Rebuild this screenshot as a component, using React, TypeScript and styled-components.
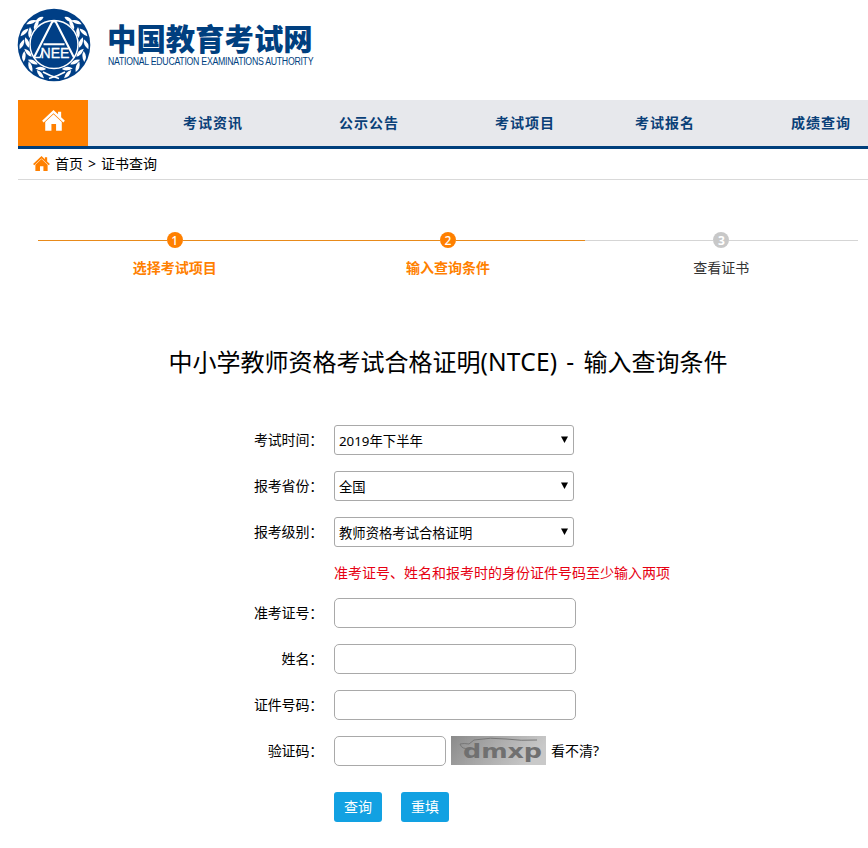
import React from 'react';
import styled, { createGlobalStyle } from 'styled-components';

const Global = createGlobalStyle`
  * { box-sizing: border-box; }
  html, body { margin: 0; background: #fff; overflow: hidden; }
  body, input, button {
    font-family: "Noto Sans", "Noto Sans CJK SC", sans-serif;
    font-size: 14px;
    color: #000;
  }
`;

const Page = styled.div`
  width: 868px;
  height: 848px;
  overflow: hidden;
  padding-left: 18px;
`;

const Header = styled.header`
  display: flex;
  height: 100px;
  padding-top: 8px;
`;

const Emblem = styled.svg`
  width: 74px;
  height: 74px;
  flex: none;
  margin-left: -1px;
`;

const Brand = styled.div`
  margin: 11px 0 0 16px;
  width: 210px;
  color: #003f7f;
  white-space: nowrap;
`;

const BrandName = styled.div`
  font: 900 29.4px/36px "Noto Sans CJK SC", sans-serif;
`;

const BrandSub = styled.div`
  margin: 1px 0 0 1px;
  font: 10px/12px "Liberation Sans", sans-serif;
  letter-spacing: -0.32px;
  transform: scaleX(0.876);
  transform-origin: left;
`;

const Nav = styled.nav`
  display: flex;
  height: 49px;
  background: #e7e8ec;
  border-bottom: 3px solid #003f7c;
`;

const HomeTab = styled.a`
  flex: none;
  width: 70px;
  height: 46px;
  background: #ff8000;
  display: flex;
  justify-content: center;
  padding-top: 10px;
  margin-right: 47px;
`;

const NavItem = styled.a<{ $width: number }>`
  width: ${(p) => p.$width}px;
  flex: none;
  text-align: center;
  font-weight: 700;
  font-size: 14px;
  line-height: 46px;
  letter-spacing: 1px;
  color: #0a4078;
`;

const Crumbs = styled.div`
  display: flex;
  align-items: center;
  height: 31px;
  padding: 0 0 1px 15px;
  border-bottom: 1px solid #d9d9d9;
  white-space: pre;
`;

const CrumbText = styled.span`
  margin: -2px 0 0 5px;
  word-spacing: 1.4px;
`;

const Steps = styled.ol`
  list-style: none;
  display: flex;
  width: 820px;
  margin: 52px 0 0 20px;
  padding: 0;
`;

const Step = styled.li<{ $active: boolean }>`
  flex: 1;
  display: flex;
  flex-direction: column;
  align-items: center;
  color: ${(p) => (p.$active ? '#ff8000' : '#333')};
  font-weight: ${(p) => (p.$active ? 700 : 400)};
  line-height: 20px;
`;

const Rail = styled.div<{ $active: boolean }>`
  width: 100%;
  display: flex;
  align-items: center;
  margin-bottom: 10px;
  &::before, &::after {
    content: '';
    flex: 1;
    height: 1px;
    background: ${(p) => (p.$active ? '#e88a1a' : '#d5d5d5')};
  }
`;

const Dot = styled.span<{ $active: boolean }>`
  width: 16px;
  height: 16px;
  border-radius: 50%;
  background: ${(p) => (p.$active ? '#ff8000' : '#c8c8c8')};
  color: #fff;
  font: ${(p) => (p.$active ? 500 : 700)} 12px/17px "Noto Sans", sans-serif;
  text-align: center;
`;

const Title = styled.h1`
  width: 860px;
  margin: 66px 0 0;
  font-size: 24px;
  font-weight: 400;
  line-height: 36px;
  text-align: center;
  white-space: nowrap;
`;

const Latin = styled.span`
  font-size: 24.5px;
  letter-spacing: 0.2px;
  word-spacing: 2.5px;
`;

const Form = styled.form`
  display: flex;
  flex-direction: column;
  gap: 16px;
  margin-top: 45px;
`;

const Row = styled.div`
  display: flex;
  align-items: center;
  height: 30px;
`;

const Label = styled.label`
  width: 305px;
  margin: -2px 11px 0 0;
  text-align: right;
  font-family: "Noto Sans CJK SC", sans-serif;
  letter-spacing: -0.2px;
`;

const Select = styled.div`
  display: flex;
  align-items: center;
  justify-content: space-between;
  width: 240px;
  height: 30px;
  padding: 1px 5px 0 4px;
  border: 1px solid #a9a9a9;
  border-radius: 3px;
  font-size: 13.33px;
`;

const Arrow = styled.svg`
  width: 7px;
  height: 7px;
  margin-top: -2px;
`;

const Input = styled.input<{ $width: number }>`
  width: ${(p) => p.$width}px;
  height: 30px;
  border: 1px solid #a9a9a9;
  border-radius: 5px;
  background: #fff;
  padding: 0 5px;
`;

const Hint = styled.p`
  margin: 0 0 0 316px;
  height: 19px;
  line-height: 19px;
  color: #e60012;
`;

const Captcha = styled.svg`
  width: 95px;
  height: 29px;
  margin: -1px 5px 0;
`;

const Refresh = styled.span`
  margin-top: -2px;
`;

const Actions = styled.div`
  display: flex;
  gap: 19px;
  margin: 10px 0 0 316px;
`;

const Button = styled.button`
  width: 48px;
  height: 30px;
  padding: 0 0 2px;
  border: 0;
  border-radius: 3px;
  background: #12a1e2;
  color: #fff;
`;

const leaves = [26, 48, 70, 92, 114, 136];

const Wreath = () => (
  <g fill="#fff">
    {leaves.map((a) => (
      <g key={a} transform={`rotate(${a})`}>
        <path transform="translate(-1 27.2) rotate(-20)" d="M-6 0Q-1 -4.2 5 -0.5Q1 3 -6 0Z" />
        <path transform="translate(1 32) rotate(20)" d="M-6 0Q-1 -3 5 0.5Q0 4.2 -6 0Z" />
      </g>
    ))}
    <path transform="rotate(150) translate(-1 29.5)" d="M-4 0Q0 -3.4 6 0Q0 3.4 -4 0Z" />
    <path d="M5 33.5Q-4 31 -11 27" fill="none" stroke="#fff" strokeWidth="1.6" />
  </g>
);

const Logo = () => (
  <Emblem viewBox="-37 -37 74 74">
    <circle r="36.3" fill="#003f86" />
    <Wreath />
    <g transform="scale(-1 1)"><Wreath /></g>
    <circle cy="-0.5" r="24" fill="#003f86" stroke="#fff" strokeWidth="1.5" />
    <path d="M-20 12.5L-1.6 -23.5H1.6L20 12.5M-10.5 -0.7H10.5" fill="none" stroke="#fff" strokeWidth="2.1" />
    <path d="M-20 12.5H-14L-11 5" fill="none" stroke="#fff" strokeWidth="1.4" />
    <text x="1" y="12.6" textAnchor="middle" textLength="29" lengthAdjust="spacingAndGlyphs" fill="#fff" stroke="#fff" strokeWidth="0.3" fontFamily="Liberation Sans" fontSize="14">NEE</text>
  </Emblem>
);

const House = ({ size, color }: { size: number; color: string }) => (
  <svg width={size} height={size * 0.9} viewBox="0 0 22 20" fill={color}>
    <path d="M11 0L15.4 4.2V1.6H18.4V7.1L22 10.5L20.5 12L11 3.2L1.5 12L0 10.5Z" />
    <path d="M11 4L19 11.5V20H13.5V13.5H9V20H3V11.5Z" />
  </svg>
);

const nav = [
  { text: '考试资讯', width: 156 },
  { text: '公示公告', width: 156 },
  { text: '考试项目', width: 156 },
  { text: '考试报名', width: 124 },
  { text: '成绩查询', width: 188 },
];

const steps = ['选择考试项目', '输入查询条件', '查看证书'];

const selects = [
  ['考试时间：', '2019年下半年'],
  ['报考省份：', '全国'],
  ['报考级别：', '教师资格考试合格证明'],
];

export default function App() {
  return (
    <>
      <Global />
      <Page>
        <Header>
          <Logo />
          <Brand>
            <BrandName>中国教育考试网</BrandName>
            <BrandSub>NATIONAL EDUCATION EXAMINATIONS AUTHORITY</BrandSub>
          </Brand>
        </Header>
        <Nav>
          <HomeTab><House size={23} color="#fff" /></HomeTab>
          {nav.map((n) => <NavItem key={n.text} $width={n.width}>{n.text}</NavItem>)}
        </Nav>
        <Crumbs>
          <House size={17} color="#ff8000" />
          <CrumbText>首页 &gt; 证书查询</CrumbText>
        </Crumbs>
        <Steps>
          {steps.map((s, i) => (
            <Step key={s} $active={i < 2}>
              <Rail $active={i < 2}><Dot $active={i < 2}>{i + 1}</Dot></Rail>
              {s}
            </Step>
          ))}
        </Steps>
        <Title>中小学教师资格考试合格证明<Latin>(NTCE) - </Latin>输入查询条件</Title>
        <Form>
          {selects.map(([label, value]) => (
            <Row key={label}>
              <Label>{label}</Label>
              <Select>
                {value}
                <Arrow viewBox="0 0 7 7"><path d="M0 0.5H7L3.5 7Z" /></Arrow>
              </Select>
            </Row>
          ))}
          <Hint>准考证号、姓名和报考时的身份证件号码至少输入两项</Hint>
          {['准考证号：', '姓名：', '证件号码：'].map((label) => (
            <Row key={label}>
              <Label>{label}</Label>
              <Input $width={242} />
            </Row>
          ))}
          <Row>
            <Label>验证码：</Label>
            <Input $width={112} />
            <Captcha viewBox="0 0 95 29">
              <defs>
                <linearGradient id="haze" x1="0" y1="0" x2="1" y2="0.25">
                  <stop offset="0" stopColor="#8b8b8b" />
                  <stop offset="1" stopColor="#c9c9c9" />
                </linearGradient>
              </defs>
              <rect width="95" height="29" fill="url(#haze)" />
              <path d="M9 8Q13 7 18 8L23 4Q40 1 55 3T86 4M9 8Q11 14 18 12" fill="none" stroke="#777" />
              <text x="12" y="21.5" textLength="79" lengthAdjust="spacingAndGlyphs" fontFamily="DejaVu Sans" fontWeight="700" fontSize="20" fill="#707070">dmxp</text>
            </Captcha>
            <Refresh>看不清?</Refresh>
          </Row>
          <Actions>
            <Button type="button">查询</Button>
            <Button type="button">重填</Button>
          </Actions>
        </Form>
      </Page>
    </>
  );
}
